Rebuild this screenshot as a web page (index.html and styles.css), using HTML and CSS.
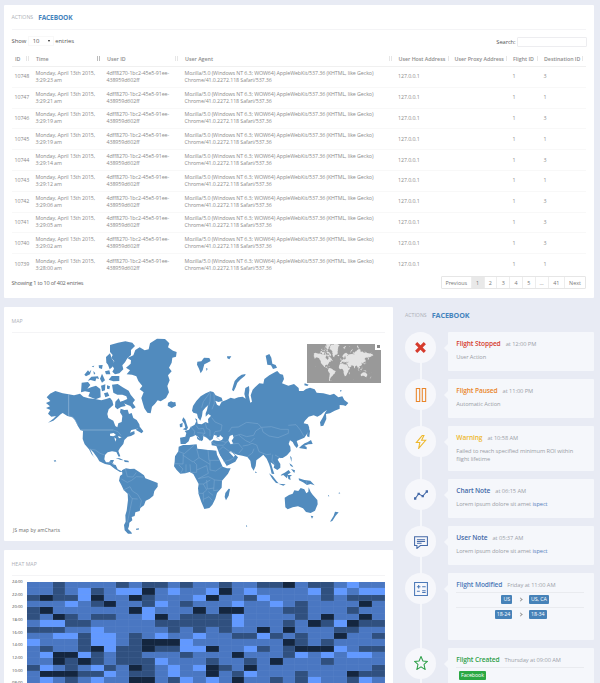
FILE: index.html
```html
<!DOCTYPE html>
<html lang="en">
<head>
<meta charset="utf-8">
<title>Flight actions</title>
<link rel="stylesheet" href="styles.css">
</head>
<body>
<main class="page">
  <section class="card actions">
    <header class="card-head"><span class="eyebrow">ACTIONS</span><strong class="brand">FACEBOOK</strong></header>
    <div class="tools">
      <div class="length">Show <span class="select">10<i class="caret"></i></span> entries</div>
      <label class="search">Search: <span class="input"></span></label>
    </div>
    <table class="grid">
      <colgroup><col class="c-id"><col class="c-time"><col class="c-user"><col class="c-agent"><col class="c-host"><col class="c-proxy"><col class="c-flight"><col class="c-dest"></colgroup>
      <thead><tr><th>ID<i class="sort"></i></th><th>Time<i class="sort on"></i></th><th>User ID<i class="sort"></i></th><th>User Agent<i class="sort"></i></th><th>User Host Address<i class="sort half"></i></th><th>User Proxy Address<i class="sort half"></i></th><th>Flight ID<i class="sort half"></i></th><th>Destination ID<i class="sort half"></i></th></tr></thead>
      <tbody id="rows"></tbody>
    </table>
    <footer class="table-foot">
      <span class="summary">Showing 1 to 10 of 402 entries</span>
      <nav class="pager"><span class="w">Previous</span><span class="cur">1</span><span>2</span><span>3</span><span>4</span><span>5</span><span>...</span><span class="wide">41</span><span class="n">Next</span></nav>
    </footer>
  </section>

  <div class="columns">
    <div class="left">
      <section class="card map-card">
        <header class="card-head small"><span class="eyebrow">MAP</span></header>
        <div class="map-box">
        <svg class="map" viewBox="-54 15 1119 609">
          <defs>
            <g id="world">
              <path d="M50 202L60 191L76 183L98 190L116 193L132 196L150 191L160 200L176 205L195 207L214 211L228 207L240 203L247 212L250 225L236 238L232 252L235 264L250 272L256 288L262 292L265 280L275 276L277 258L270 247L272 236L283 240L293 239L297 252L305 249L310 264L320 270L328 283L330 294L315 298L304 300L300 308L313 303L314 312L303 318L293 320L283 330L280 342L270 354L265 363L271 379L266 380L259 366L246 364L233 367L225 375L223 388L228 397L237 397L242 390L252 390L247 402L257 405L263 418L275 424L281 417L278 425L270 426L254 416L240 405L225 402L208 394L202 383L190 367L180 357L190 378L195 385L185 373L177 358L164 343L158 327L159 303L151 300L143 287L135 270L127 262L112 258L98 249L92 253L84 260L70 272L54 278L70 266L78 258L64 260L54 251L61 240L48 234L60 229L48 219L61 213Z"/>
              <path d="M240 45L264 38L286 34L307 38L315 48L303 60L303 75L292 85L285 97L277 106L280 118L268 130L255 133L247 125L252 116L246 104L253 94L244 83L248 75L240 66Z"/>
              <path d="M228 81L240 70L245 85L252 95L248 110L239 118L234 104L229 98Z"/>
              <path d="M245 138L268 138L268 153L250 154L236 149Z"/>
              <path d="M155 158L174 156L181 165L172 176L183 172L198 167L211 177L212 202L197 208L175 199L180 187L165 184L153 187Z"/>
              <path d="M163 134L174 121L178 126L184 119L180 133L168 139ZM173 152L184 140L204 139L207 147L199 145L196 154L182 150ZM206 106L218 105L216 117L207 114ZM225 124L238 121L241 133L228 133ZM210 146L216 131L225 151L216 158ZM213 167L226 163L225 181L216 184ZM222 190L233 187L238 197L226 202ZM231 166L240 169L238 178L231 176ZM190 123L196 130L192 134ZM185 109L193 107L190 112Z"/>
              <path d="M246 164L263 162L278 172L296 182L302 194L315 210L308 219L317 232L308 237L301 228L286 222L273 215L292 207L289 199L277 194L262 194L250 188Z"/>
              <path d="M256 215L266 205L271 215L280 214L287 228L273 231L262 238L255 231ZM317 299L330 291L340 304L335 310Z"/>
              <path d="M316 60L329 52L344 61L356 58L360 40L381 26L405 27L418 40L414 52L429 62L440 66L438 80L427 83L425 98L417 113L425 124L414 136L419 151L412 168L417 187L408 204L392 214L383 211L375 221L366 230L362 250L352 248L343 235L338 218L334 204L341 187L329 178L337 168L325 153L319 139L306 134L290 133L300 121L288 113L302 101L303 91L292 84L310 76Z"/>
              <path d="M414 218L423 214L430 217L436 216L438 227L425 234L413 227ZM257 384L269 385L281 391L272 390ZM282 390L295 392L297 397L284 396Z"/>
              <path d="M276 421L288 415L300 417L313 416L329 427L342 436L346 445L362 451L383 459L383 470L373 483L370 497L358 507L347 512L342 526L331 534L329 543L316 547L314 558L305 561L307 571L298 578L297 588L294 597L304 607L306 611L294 611L284 601L282 585L287 575L286 556L290 542L294 510L293 491L281 480L274 465L267 452L270 438L277 433Z"/>
              <path d="M318 596L327 595L326 599L318 599ZM71 392L76 390L79 394L74 395Z"/>
              <path d="M502 95L514 94L522 83L538 84L542 93L531 99L523 103L518 121L512 130L507 116L501 104ZM528 114L533 116L530 123ZM591 79L604 79L598 88L592 85ZM707 77L718 72L724 83L727 101L737 105L741 113L729 117L723 106L712 104L710 92Z"/>
              <path d="M647 132L635 134L624 142L614 153L610 166L606 180L611 184L617 172L622 158L632 148L645 137Z"/>
              <path d="M490 248L486 242L489 228L499 213L512 199L527 190L541 184L550 186L557 196L575 203L578 213L565 216L556 212L561 224L568 228L575 215L589 210L602 203L613 206L625 202L638 200L647 206L643 192L646 174L657 168L658 181L656 196L661 218L666 215L662 196L668 179L675 172L688 160L700 161L703 147L718 136L737 125L742 123L750 132L759 134L762 147L756 160L775 167L792 162L806 174L807 183L820 183L828 177L840 173L854 178L860 188L880 190L900 195L912 191L925 202L937 199L943 210L955 219L947 228L940 226L929 225L929 236L914 242L900 250L888 252L889 267L880 287L872 289L870 277L878 263L886 247L891 240L881 247L873 254L862 260L851 256L836 260L824 273L821 280L834 283L838 294L833 309L823 323L807 330L800 333L805 347L800 354L793 346L788 336L780 331L776 342L781 350L782 363L771 376L758 384L747 384L743 389L751 402L751 413L742 420L731 413L733 405L722 397L728 417L733 432L725 431L721 414L717 402L710 386L700 374L692 381L679 391L677 408L671 422L664 411L661 392L652 381L637 377L622 374L611 370L624 382L616 395L588 409L582 397L570 377L565 363L559 348L545 346L544 336L551 330L571 332L580 324L570 315L568 321L557 322L552 315L548 327L540 332L530 323L520 318L519 330L513 334L506 322L496 315L490 319L480 322L476 334L466 342L452 342L450 323L466 320L469 309L464 303L477 299L482 291L494 284L499 274L495 265L501 268L503 281L515 283L527 276L535 280L534 267L543 257L535 252L527 260L527 250L531 240L534 226L526 233L518 243L516 258L511 272L504 263L501 251Z"/>
              <path d="M458 298L466 293L463 281L456 271L460 262L466 269L470 282L474 293L469 301ZM449 283L458 278L457 291L450 292ZM500 319L510 326L511 333L502 327Z"/>
              <path d="M446 350L459 345L477 345L500 343L502 356L518 358L534 360L547 361L559 362L561 374L569 391L578 410L591 415L602 415L594 431L576 452L575 473L561 489L556 506L547 524L538 534L523 537L514 516L506 493L504 475L506 462L498 447L490 432L479 426L466 430L451 431L440 420L432 409L434 395L435 379L445 364Z"/>
              <path d="M586 489L596 476L600 477L596 497L588 511L584 501Z"/>
              <path d="M843 330L848 342L835 343L823 347L830 351L830 358L807 354L814 347L824 340L832 337ZM834 288L840 303L838 322L831 319Z"/>
              <path d="M752 437L760 435L771 445L774 433L782 428L776 420L764 428L755 433ZM717 430L728 438L740 454L746 460L738 459L727 446ZM745 461L767 463L760 467ZM773 434L786 435L780 440L782 450L775 447ZM778 400L786 405L790 412L782 408ZM783 417L795 421L793 429ZM806 445L823 450L841 452L854 466L842 462L831 465L819 457L807 451ZM784 396L780 377L785 383Z"/>
              <path d="M764 503L777 495L788 491L793 481L805 483L812 474L823 478L829 490L835 485L836 472L842 486L848 494L862 510L863 523L855 542L842 549L828 546L819 535L804 529L788 532L773 538L766 532ZM842 557L850 559L846 566ZM915 545L926 547L917 557L907 573L900 575L911 557ZM676 424L681 429L676 429ZM648 585L652 589L648 590ZM895 494L898 499L894 499ZM927 487L931 490L926 491ZM930 180L936 182L931 185ZM824 160L836 164L832 168L823 166Z"/>
            </g>
            <g id="lakes">
              <path d="M240 311L251 309L258 315L250 319L240 317ZM253 322L259 327L256 335ZM264 318L275 322L267 325ZM599 318L608 314L611 323L605 332L610 341L602 343L595 331Z"/>
              <path d="M552 315L561 317L560 325L576 321L577 329L565 333L550 330Z"/>
              <path d="M561 371L567 371L590 407L586 411ZM597 366L603 364L615 376L611 381Z"/>
            </g>
          </defs>
          <use href="#world" class="land"/>
          <use href="#lakes" class="water"/>
          <path class="borders strong" d="M116 193V257M151 300H250"/>
          <path class="borders" d="M116 257L130 262L144 285M250 300L264 305L273 316M177 357L196 360L210 370L224 375M235 405L240 395L252 402M286 416L292 440L309 441L319 427M274 447L292 457L305 451L319 440L340 441M281 480L300 470L307 483L323 493L334 512L330 532M295 490L306 506L323 507M307 506L301 535L292 578M515 233L520 215L536 193L541 184M541 190L540 214L536 228M552 190L553 220L546 238M482 290L494 304L492 318M498 286L506 297L520 295L525 309L515 318M525 276L530 295L540 300L540 319M545 263L555 276L576 285L573 302L555 305L550 317M502 308L526 310M519 316L527 320M558 320L571 332L586 337L596 333M545 336L560 345L580 346L591 335M565 363L579 350L599 365L614 369M580 395L600 390L614 381M596 306L605 292L625 291L650 277L684 281L694 292L677 303L671 316L650 320L631 313L612 319M605 342L625 340L638 356L626 370M626 315L647 332L660 338L674 324M638 348L655 345L666 340L680 345L687 365L710 374L723 372M652 380L667 369L672 356M695 292L724 290L752 298L775 298L775 310L744 323L717 318L699 306L695 292M775 286L798 284L811 300L821 318M728 374L726 391L735 404M735 375L751 384M445 364L463 371L493 345M460 372L459 402L435 401M458 375L489 396L507 383L500 356M507 383L540 403M534 360L537 391H568M492 396L500 404V427L482 427M500 420L530 407L535 430L505 446M540 393V420L557 423L576 410M447 405L459 417L452 430M468 403V429M480 403L482 426M504 446L535 440L555 450L576 452M506 462L520 462L530 480L518 490M504 490H520L520 515M530 450L532 477L552 474M553 450L551 482L565 480M520 462L541 450M520 508L537 500L546 511M535 485L549 496M830 452V463"/>
        </svg>
        <svg class="mini" viewBox="-50 50 1121 583"><use href="#world"/></svg>
        <span class="mini-toggle"></span>
        <span class="credit">JS map by amCharts</span>
        </div>
      </section>
      <section class="card heat-card">
        <header class="card-head small"><span class="eyebrow">HEAT MAP</span></header>
        <div class="heat">
          <div class="hours"><span>24:00</span><span>22:00</span><span>20:00</span><span>18:00</span><span>16:00</span><span>14:00</span><span>12:00</span><span>10:00</span><span class="last">08:00</span></div>
          <div class="cells" id="cells"></div>
        </div>
      </section>
    </div>

    <aside class="feed">
      <header class="feed-head"><span class="eyebrow">ACTIONS</span><strong class="brand">FACEBOOK</strong></header>
      <ol class="timeline">
        <li class="item h39 red"><span class="dot"><svg viewBox="0 0 24 24"><path class="fill" d="M6 2L12 8L18 2L22 6L16 12L22 18L18 22L12 16L6 22L2 18L8 12L2 6Z"/></svg></span>
          <div class="note"><h3>Flight Stopped<small>at 12:00 PM</small></h3><p>User Action</p></div></li>
        <li class="item h39 orange"><span class="dot"><svg viewBox="0 0 24 24"><path d="M4 1H9.800V23H4ZM14.200 1H20V23H14.200Z"/></svg></span>
          <div class="note"><h3>Flight Paused<small>at 11:00 PM</small></h3><p>Automatic Action</p></div></li>
        <li class="item h45 yellow"><span class="dot"><svg viewBox="0 0 24 24"><path d="M14 1L4 13H10L8 23L20 9H13L17 1Z"/></svg></span>
          <div class="note"><h3>Warning<small>at 10:58 AM</small></h3><p>Failed to reach specified minimum ROI within<br>flight lifetime</p></div></li>
        <li class="item h39 navy"><span class="dot"><svg viewBox="0 0 24 24"><path d="M2 18L8 10L15 14L22 6"/><path class="fill" d="M0 16H4V20H0ZM6 8H10V12H6ZM13 12H17V16H13ZM20 4H24V8H20Z"/></svg></span>
          <div class="note"><h3>Chart Note<small>at 06:15 AM</small></h3><p>Lorem ipsum dolore sit amet <a>ispect</a></p></div></li>
        <li class="item h39 navy"><span class="dot"><svg viewBox="0 0 24 24"><path d="M1 3H23V18H11L5 23V18H1ZM5 8H19M5 11H19M5 14H13"/></svg></span>
          <div class="note"><h3>User Note<small>at 05:37 AM</small></h3><p>Lorem ipsum dolore sit amet <a>ispect</a></p></div></li>
        <li class="item h67 blue"><span class="dot"><svg viewBox="0 0 24 24"><path d="M1 1H23V23H1ZM5 8H11M8 5V11M14 8H20M5 16H10M14 15H20M14 18H20"/></svg></span>
          <div class="note"><h3>Flight Modified<small>Friday at 11:00 AM</small></h3>
            <div class="change"><span><b class="tag">US</b></span><i class="chev"></i><span><b class="tag">US, CA</b></span></div>
            <div class="change"><span><b class="tag">18-24</b></span><i class="chev"></i><span><b class="tag">18-34</b></span></div></div></li>
        <li class="item h67 green"><span class="dot"><svg viewBox="0 0 24 24"><path d="M12 1L15.3 8.6L23 9.2L17.2 14.5L19 23L12 18.5L5 23L6.800 14.500L1 9.200L8.700 8.600Z"/></svg></span>
          <div class="note"><h3>Flight Created<small>Thursday at 09:00 AM</small></h3>
            <div class="created"><b class="tag">Facebook</b></div></div></li>
      </ol>
    </aside>
  </div>
</main>
<script src="app.js"></script>
</body>
</html>
```

FILE: styles.css
```css
* { box-sizing: border-box; }
html, body { margin: 0; height: 683px; overflow: hidden; }
body { background: #e8ebf4; font-family: "Open Sans", sans-serif; font-size: 5.6px; color: #999; }
.page { padding: 5px 0 0 4px; height: 683px; overflow: hidden; }
.card { background: #fff; border-radius: 1px; padding: 0 8px; }
.card-head { height: 25px; display: flex; align-items: center; gap: 5px; border-bottom: 1px solid #f4f4f6; color: #aeb1b5; }
.eyebrow { font-size: 5.2px; color: #adb0b7; margin-left: -.5px; }
.brand { font-size: 6.6px; letter-spacing: -.13px; color: #4584bd; font-weight: 700; }
.actions { width: 590px; height: 293px; }

.tools { height: 23px; display: flex; justify-content: space-between; color: #555; font-size: 5.9px; padding-top: 6px; }
.length, .search { display: flex; align-items: center; height: 10px; letter-spacing: -.05px; }
.length { margin-left: -.5px; }
.select { display: flex; align-items: center; justify-content: space-between; width: 26px; height: 10px; margin: 0 1.5px; padding: 0 3px 0 4px; border: 1px solid #f8f8f8; }
.caret { border: 1.5px solid transparent; border-top: 2.5px solid #222; border-bottom: 0; }
.search { height: 11px; font-size: 5.8px; letter-spacing: -.1px; }
.input { width: 70px; height: 10px; margin-left: 1.5px; margin-right: -1px; border: 1px solid #ededf0; border-radius: 1px; }

.grid { width: 574px; table-layout: fixed; border-collapse: separate; border-spacing: 0; font-size: 5.3px; letter-spacing: -.085px; line-height: 7px; color: #8b8b8b; }
.c-id { width: 21px; } .c-time { width: 71px; } .c-user { width: 78px; } .c-agent { width: 213.5px; }
.c-host { width: 56px; } .c-proxy { width: 58.5px; } .c-flight { width: 31px; } .c-dest { width: 45px; }
.grid th { height: 14px; text-align: left; font-weight: 600; padding: 0 0 1px 3px; white-space: nowrap; color: #8d8d8d; border-bottom: 1px solid #f0f0f0; font-size: 5.3px; letter-spacing: -.02px; position: relative; }
.grid td { height: 20.8px; padding: 0 0 0 2.5px; vertical-align: middle; border-bottom: 1px solid #f8f8f8; white-space: nowrap; }
.grid tr:last-child td { border-bottom: 0; }
.sort { position: absolute; right: 4px; top: 3px; width: 3px; height: 5px; border-left: 1px solid #e6e6e6; border-right: 1px solid #e6e6e6; }
.sort.on { border-color: #aaa #bbb; }
.sort.half { border-right: 0; right: 1px; }

.table-foot { display: flex; justify-content: space-between; align-items: center; height: 14px; margin-top: 1px; color: #666; font-size: 5.6px; }
.summary { letter-spacing: -.23px; margin-left: -.5px; }
.pager { display: flex; height: 13px; border: 1px solid #e6e6e6; border-radius: 1px; color: #777; font-size: 5.4px; letter-spacing: 0; }
.pager span { width: 12.800px; display: flex; align-items: center; justify-content: center; border-right: 1px solid #ededed; }
.pager span:last-child { border-right: 0; }
.pager .w { width: 30px; } .pager .wide { width: 16.500px; } .pager .n { width: 20px; }
.pager .cur { background: #e9e9e9; }

.columns { display: grid; grid-template-columns: 389px 1fr; padding-top: 9px; }
.map-card { height: 234px; }
.card-head.small { height: 26px; padding-top: 2px; }
.map-box { position: relative; height: 208px; padding-top: 2px; }
.map { display: block; width: 373px; height: 203px; }
.land { fill: #518bbe; }
.water { fill: #fff; }
.borders { fill: none; stroke: #7faad2; stroke-width: 1.600; }
.borders.strong { stroke: #a9c6e0; }
.mini { position: absolute; left: 294.500px; top: 11px; width: 74px; height: 38.500px; background: #999; fill: #e4e4e4; }
.mini-toggle { position: absolute; left: 363px; top: 10px; width: 7px; height: 7px; border: 2.5px solid #fff; background: #888; }
.credit { position: absolute; left: 1px; top: 194px; font-size: 4.700px; letter-spacing: .2px; color: #666; white-space: nowrap; }

.heat-card { margin-top: 9px; height: 150px; }
.heat { display: flex; padding-top: 6px; }
.hours { width: 15px; display: flex; flex-direction: column; font-size: 4.2px; color: #444; margin-top: -6px; }
.hours span { height: 12.700px; line-height: 12.700px; flex: none; }
.hours .last { line-height: 10.500px; }
.cells { width: 358px; display: grid; grid-template-columns: repeat(28, 1fr); grid-auto-rows: 6.37px; background: #4c79c3; }
.m { background: #4a77c2; } .d { background: #30507f; } .k { background: #14263f; } .l { background: #6299ff; }
.cells i { box-shadow: inset -.5px -.5px 0 rgba(130, 160, 215, .2); }

.feed { padding-left: 12px; }
.feed-head { height: 16px; display: flex; align-items: center; gap: 5px; }
.feed-head .brand { font-size: 7.2px; letter-spacing: -.08px; }
.feed-head .eyebrow { margin-left: 0; }
.timeline { list-style: none; margin: 9px 0 0; padding: 0; display: flex; flex-direction: column; gap: 8px; }
.item { display: grid; grid-template-columns: 31px 146px; column-gap: 12px; position: relative; }
.item::before { content: ""; position: absolute; left: 15px; top: 30px; bottom: -9px; width: 1.500px; background: #f5f7fb; }
.h39 { height: 39px; } .h45 { height: 45px; } .h67 { height: 66.500px; }
.dot { width: 31px; height: 31px; border-radius: 50%; background: #f6f7fb; display: flex; align-items: center; justify-content: center; position: relative; }
.dot svg { width: 14px; height: 14px; fill: none; stroke: currentColor; stroke-width: 1.800; }
.dot .fill { fill: currentColor; stroke: none; }
.red .dot svg { width: 13px; height: 13px; }
.note { background: #f5f7fb; border-radius: 1px; padding: 7px 10px 0 8.300px; position: relative; }
.note::before { content: ""; position: absolute; left: -4px; top: 12px; border: 4px solid transparent; border-right-color: #f5f7fb; border-left: 0; }
.note h3 { margin: 0; font-size: 6.600px; letter-spacing: -.1px; line-height: 9px; font-weight: 600; white-space: nowrap; }
.note small { font-size: 5.700px; font-weight: 400; color: #9b9fa8; margin-left: 5px; letter-spacing: -.05px; }
.note p { margin: 5px 0 0; font-size: 5.700px; letter-spacing: -.07px; line-height: 7.700px; color: #999da5; white-space: nowrap; }
.note a { color: #5580bd; }
.red { color: #d63b2d; } .orange { color: #e98529; } .yellow { color: #eeb82c; }
.navy { color: #456aa8; } .blue { color: #4c79b8; } .green { color: #2ea049; }
.change { display: grid; grid-template-columns: 56px 16.500px 1fr; align-items: center; height: 14.800px; border-top: 1px solid #e9ebef; }
.h67 h3 + div { margin-top: 2px; }
.change span:first-child { text-align: right; }
.change span { line-height: 0; }
.tag { display: inline-block; background: #4682b8; color: #fff; font-weight: 400; font-size: 5.300px; letter-spacing: -.08px; line-height: 9px; padding: 0 2.200px; border-radius: 1px; }
.chev { width: 3px; height: 3px; border: solid #999; border-width: 1px 1px 0 0; transform: rotate(45deg); justify-self: center; }
.created { border-top: 1px solid #e9ebef; padding: 3.500px 2.500px; line-height: 0; }
.green .tag { background: #2ba843; }
```

FILE: app.js
```js
const rows = [
  [10748, "23", 3], [10747, "21", 1], [10746, "19", 3], [10745, "19", 1], [10744, "14", 3],
  [10743, "12", 1], [10742, "06", 3], [10741, "05", 3], [10740, "02", 3], [10739, "00", 1]
];
document.getElementById("rows").innerHTML = rows.map(([id, sec, dest], i) => {
  const minute = i === 9 ? "3:28" : "3:29";
  return `<tr><td>${id}</td><td>Monday, April 13th 2015,<br>${minute}:${sec} am</td>` +
    `<td>4dff8270-1bc2-45e5-91ee-<br>438959d602ff</td>` +
    `<td>Mozilla/5.0 (Windows NT 6.3; WOW64) AppleWebKit/537.36 (KHTML, like Gecko)<br>Chrome/41.0.2272.118 Safari/537.36</td>` +
    `<td>127.0.0.1</td><td></td><td>1</td><td>${dest}</td></tr>`;
}).join("");

// one letter per cell: m medium, d dark, k darkest, l light
const heat = [
  "mmdmmmmdmddmdmmdmmddkmddmlmm",
  "mmdmldmllkmlmmlkmlmmmmldlmll",
  "dkddlkmmkdmmmlkmmdlmmmmdmddd",
  "mmmlmdkmmdlmdmmmlmmlmdmmmmkm",
  "dkmmmmmmklmmmkmkkmmmddmmmdmm",
  "dmkdmddmmlkmddddlmmmmdmkmmkm",
  "mllddmmmmmddddddlmmmdmkdlkdd",
  "dddmmlmmmmmdmdmdmmkmkmmmddmm",
  "mmlldllmdmlmmlmmddldmdmmkmmd",
  "lmmmdllmdkkklmmmmmmmkdmdmmmm",
  "mdmmdklddkddllkmmldmdkkklmdd",
  "mlkkldmddmmmdmmmkmmmdlmlmllm",
  "mmkdkdmdddlmmmdmmdmkmmmdmmmm",
  "dlmdmldmkdmlmlkdmkmmmmmmmmmd",
  "mkkkddlmddmlmmkmdlmmmdmmmkdd",
  "mlmdmlmmkkmdlmlmkmmdmdlmmdlm"
];
document.getElementById("cells").innerHTML = heat
  .map(r => [...r].map(c => `<i class="${c}"></i>`).join("")).join("");
```
